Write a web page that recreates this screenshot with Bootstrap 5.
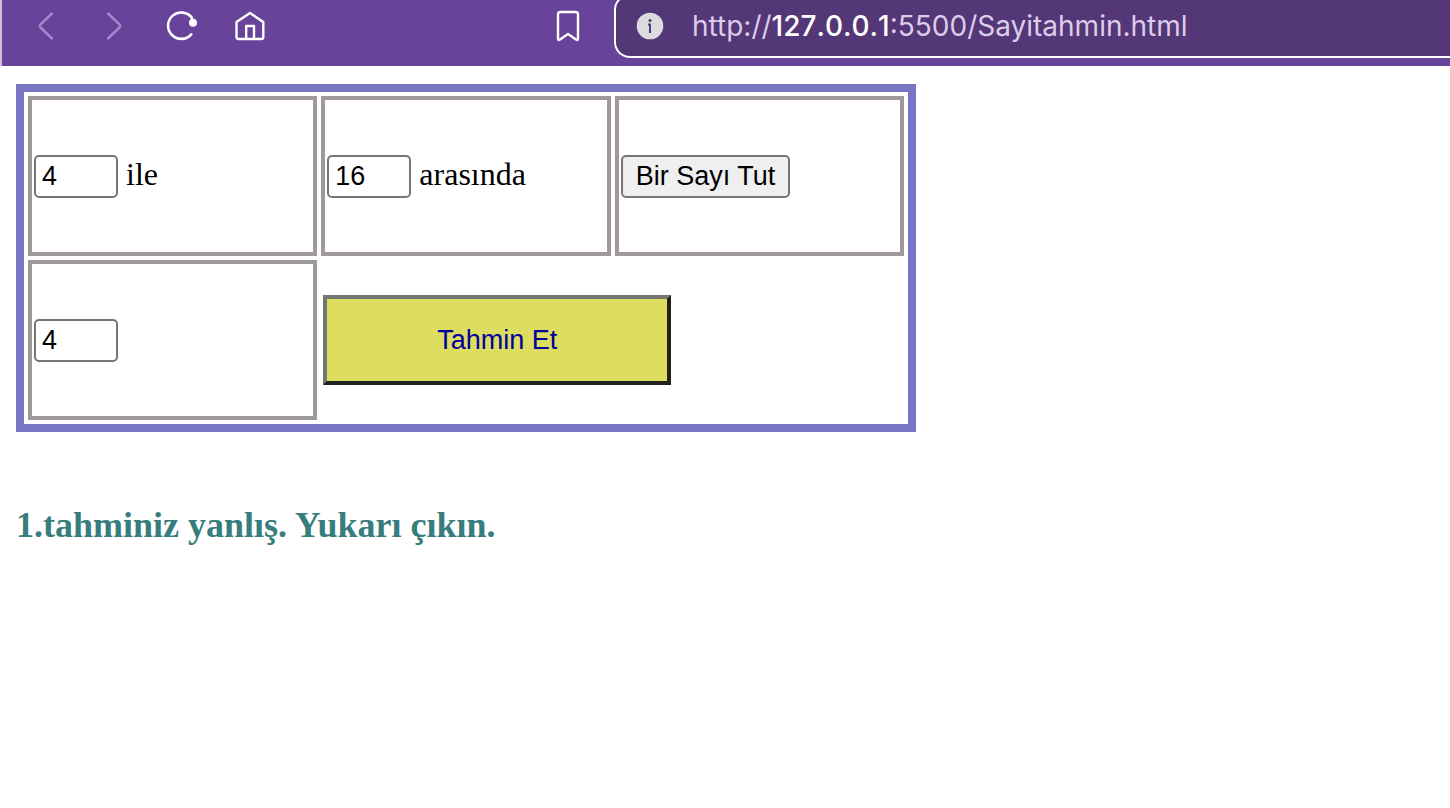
<!DOCTYPE html>
<html lang="tr">
<head>
<meta charset="utf-8">
<meta name="viewport" content="width=device-width, initial-scale=1">
<title>Sayı Tahmin</title>
<link href="https://cdn.jsdelivr.net/npm/bootstrap@5.3.0/dist/css/bootstrap.min.css" rel="stylesheet">
<style>
  body { font-family: "Liberation Serif", serif; font-size: 32px; line-height: 36px; color: #000; background: #fff; }
  .browser-bar { height: 66px; background: #68439a; border-left: 2px solid #cfc2df; }
  .tool-btn { width: 32px; height: 32px; color: #fff; background: none; }
  .tool-btn svg { display: block; }
  .tool-btn.dimmed { color: #a685cb; }
  .nav-tools { padding: 10px 30px 0 28px; gap: 36px; width: 612px; }
  .address-box { height: 64px; margin-top: -6px; padding-left: 20px; gap: 28px; background: #533777; border: 2px solid #fff; border-right: 0; border-radius: 16px 0 0 16px; }
  .address-url { font-family: Inter, sans-serif; font-size: 28px; line-height: 36px; color: #dccdea; white-space: nowrap; }
  .address-url span { color: #fff; font-weight: 500; font-kerning: none; }
  .page-content { padding: 18px 16px; }
  .guess-table { width: 900px; max-width: 100%; border: 8px solid #7875c4; border-collapse: separate; border-spacing: 4px; table-layout: fixed; }
  .guess-table td { height: 160px; padding: 2px; vertical-align: middle; }
  .guess-table .boxed { border: 4px solid #9f9999; }
  .num-input, .pick-btn, .guess-btn { font-family: "Liberation Sans", sans-serif; font-size: 27px; line-height: 30px; }
  .num-input { width: 84px; height: 43px; padding: 2px 6px; border: 2px solid #767676; border-radius: 5px; color: #000; background: #fff; }
  .pick-btn { height: 43px; padding: 2px 13px; border: 2px solid #767676; border-radius: 5px; color: #000; background: #efefef; }
  .guess-btn { width: 348px; height: 90px; color: #00009b; background: #dddd60; border: 4px solid; border-color: #767773 #20201c #20201c #767773; }
  .result-text { margin: 73px 0 0; font-size: 36px; line-height: 40px; font-weight: 700; color: #377d7d; }
</style>
</head>
<body>
<header class="browser-bar d-flex overflow-hidden">
  <nav class="nav-tools d-flex flex-shrink-0" aria-label="Gezinme">
    <button type="button" class="tool-btn dimmed border-0 p-0" aria-label="Geri">
      <svg width="32" height="32" viewBox="0 0 32 32" fill="none" stroke="currentColor" stroke-width="2.500" stroke-linecap="round" stroke-linejoin="round"><path d="M22 3.500 10.500 14.500Q9 16 10.500 17.500L22 28.500"/></svg>
    </button>
    <button type="button" class="tool-btn dimmed border-0 p-0" aria-label="İleri">
      <svg width="32" height="32" viewBox="0 0 32 32" fill="none" stroke="currentColor" stroke-width="2.500" stroke-linecap="round" stroke-linejoin="round"><path d="M10 3.500 21.500 14.500Q23 16 21.500 17.500L10 28.500"/></svg>
    </button>
    <button type="button" class="tool-btn border-0 p-0" aria-label="Yenile">
      <svg width="32" height="32" viewBox="0 0 32 32" fill="none" stroke="currentColor" stroke-width="2.600" stroke-linecap="round"><path d="M25.300 24.300A13.200 13.200 0 1 1 26 8"/><circle cx="27" cy="12.800" r="4" fill="currentColor" stroke="none"/></svg>
    </button>
    <button type="button" class="tool-btn border-0 p-0" aria-label="Ana sayfa">
      <svg width="32" height="32" viewBox="0 0 32 32" fill="none" stroke="currentColor" stroke-width="2.400" stroke-linejoin="round"><path d="M16 3 29.300 12V27Q29.300 29 27.300 29H4.500Q2.500 29 2.500 27V12Z"/><path d="M12.200 29V16H20V29"/></svg>
    </button>
    <button type="button" class="tool-btn ms-auto border-0 p-0" aria-label="Yer imi">
      <svg width="32" height="32" viewBox="0 0 32 32" fill="none" stroke="currentColor" stroke-width="2.400" stroke-linejoin="round"><path d="M8.500 2H23.500Q26 2 26 4.500V28.500Q26 30.800 24 29.500L16 24 8 29.500Q6 30.800 6 28.500V4.500Q6 2 8.500 2Z"/></svg>
    </button>
  </nav>
  <div class="address-box d-flex flex-grow-1 align-items-center">
    <svg class="flex-shrink-0" width="28" height="28" viewBox="0 0 28 28" aria-hidden="true"><circle cx="14" cy="14" r="13.300" fill="#dcdbe0"/><circle cx="14" cy="8.500" r="1.500" fill="#533777"/><path d="M12 12.500H14V21" fill="none" stroke="#533777" stroke-width="2"/></svg>
    <div class="address-url" role="textbox" aria-label="Adres" tabindex="0">http://<span>127.0.0.1</span>:5500/Sayitahmin.html</div>
  </div>
</header>
<main class="page-content">
  <table class="guess-table">
    <tbody>
      <tr>
        <td class="boxed"><div class="d-flex align-items-baseline gap-2"><input type="text" class="num-input" id="low" value="4"><label for="low">ile</label></div></td>
        <td class="boxed"><div class="d-flex align-items-baseline gap-2"><input type="text" class="num-input" id="high" value="16"><label for="high">arasında</label></div></td>
        <td class="boxed"><button type="button" class="pick-btn d-block">Bir Sayı Tut</button></td>
      </tr>
      <tr>
        <td class="boxed"><input type="text" class="num-input d-block" value="4" aria-label="Tahmin"></td>
        <td colspan="2"><button type="button" class="guess-btn d-block">Tahmin Et</button></td>
      </tr>
    </tbody>
  </table>
  <h3 class="result-text">1.tahminiz yanlış. Yukarı çıkın.</h3>
</main>
<script src="https://cdn.jsdelivr.net/npm/bootstrap@5.3.0/dist/js/bootstrap.bundle.min.js"></script>
</body>
</html>
